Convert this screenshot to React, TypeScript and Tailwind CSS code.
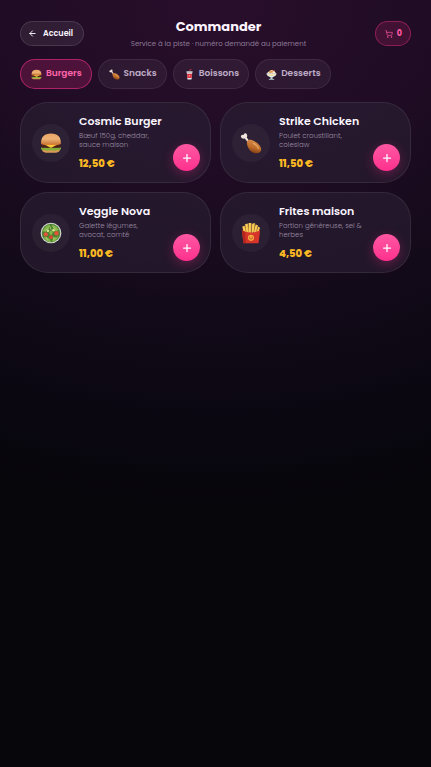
import { useState } from "react";
import type { ReactNode } from "react";
import { ArrowLeft, Plus, ShoppingCart } from "lucide-react";
import clsx from "clsx";

interface IconProps {
  className?: string;
}

function BurgerIcon({ className }: IconProps) {
  return (
    <svg viewBox="0 0 24 24" className={className} aria-hidden="true">
      <defs>
        <linearGradient id="bun" x1="0" y1="0" x2="0" y2="1">
          <stop offset="0" stopColor="#e9a566" />
          <stop offset=".5" stopColor="#eeb275" />
          <stop offset="1" stopColor="#c97838" />
        </linearGradient>
      </defs>
      <path d="M2 17.500h20c.3 3.300-1.700 5-4.500 5h-11c-2.800 0-4.800-1.700-4.500-5z" fill="#d99a55" />
      <path d="M1.200 16.800h21.600c.5 2-.8 3-2.300 2.900-1.500-.1-2.500.8-4 .8s-3-.7-4.500-.7-3 .7-4.500.7-2.500-.9-4-.8c-1.500.1-2.800-.9-2.300-2.900z" fill="#84ad3a" />
      <path d="M1.500 14.300h21c.6 1.500-.3 2.900-2 2.900h-17c-1.700 0-2.600-1.400-2-2.900z" fill="#4e2318" />
      <path d="M2 13.200h20l-4.500 1.200-4.600 2.600c-.6.400-1.200.4-1.800 0l-4.600-2.600z" fill="#fcc73b" />
      <path d="M1.200 12.400h21.600l-.4 1.300H1.600z" fill="#c4452a" />
      <path d="M1.200 12.700C.8 5.500 4.500 1.500 12 1.500s11.200 4 10.800 11.200c-3 1-18.600 1-21.600 0z" fill="url(#bun)" />
    </svg>
  );
}

function DrumstickIcon({ className }: IconProps) {
  return (
    <svg viewBox="0 0 24 24" className={className} aria-hidden="true">
      <defs>
        <linearGradient id="meat" x1=".7" y1="0" x2=".4" y2="1">
          <stop offset="0" stopColor="#d98f4c" />
          <stop offset=".6" stopColor="#bd6b29" />
          <stop offset="1" stopColor="#7d3b12" />
        </linearGradient>
      </defs>
      <path d="M10 9.500 7.400 6C8.300 4.700 8 1.700 6.200 1.300 4.800 1 4 2 4.200 3.200 2.500 2.500.7 3.600 1 5.200c.4 1.700 2.700 2.400 4.200 1.900l3.300 4z" fill="#eee4dc" />
      <path d="M8 9.600c1.500-1.700 5-1.200 8.300.7 4.700 2.700 7.500 6.200 6.700 9.600-.8 3.100-4 3.800-7.500 2.900-4.600-1.200-7-5.600-7.700-9.200-.3-1.500-.4-3.100.2-4z" fill="url(#meat)" />
      <path d="M15 12.500c2.600 1.500 4.200 3.200 5 5.200" stroke="#f4bd79" strokeWidth="1.800" strokeLinecap="round" fill="none" opacity=".6" />
    </svg>
  );
}

function DrinkIcon({ className }: IconProps) {
  return (
    <svg viewBox="0 0 24 24" className={className} aria-hidden="true">
      <path d="M12 6 13.500 1l3-.6" stroke="#e84b4b" strokeWidth="1.500" fill="none" />
      <path d="M6 7h12l-1.600 16H7.600z" fill="#e8e4ea" />
      <path d="M6.500 10.500h11l-.9 9H7.400z" fill="#d9323f" />
      <rect x="5" y="4.800" width="14" height="3" rx="1" fill="#c5d2dc" />
      <circle cx="12" cy="15" r="1.800" fill="#f48c93" />
    </svg>
  );
}

function SundaeIcon({ className }: IconProps) {
  return (
    <svg viewBox="0 0 24 24" className={className} aria-hidden="true">
      <path d="M7 15.500h10l-3 3.800v1.500l4 1.700v1H6v-1l4-1.700v-1.500z" fill="#b5cdd2" />
      <path d="M3 10c0-3.300 2.500-5 4.800-4.800C9 1.500 14.500.7 16.500 4.500c2.900 0 4.700 2.500 4.500 5.500z" fill="#fff0d6" />
      <path d="M6.500 7.600C8 3 12 1.600 15.500 4.500c1.500 2.500-1.200 4-3.200 3.300-1.800 1.700-4.500 1.500-5.800-.2z" fill="#d99a55" />
      <path d="M1 9.500h22c0 4-3.500 8-8.500 8h-5C4.500 17.500 1 13.500 1 9.500z" fill="#e6ece6" />
      <path d="M4 11h16c-1 3-3.500 4.500-6.500 4.500h-3C7.500 15.500 5 14 4 11z" fill="#f2dfae" />
      <circle cx="17.500" cy="3" r="1.600" fill="#d4363a" />
    </svg>
  );
}

function SaladIcon({ className }: IconProps) {
  return (
    <svg viewBox="0 0 24 24" className={className} aria-hidden="true">
      <circle cx="12" cy="12" r="11.300" fill="#d5dad4" />
      <circle cx="12" cy="12" r="10.100" fill="#4d8230" />
      <path d="M3 10c1.500-4 4.500-6.700 8-7l-1 4-3 1-1 3zM13 3l5 2 2.500 4-4 1-2-3zM4 16l4 1 3 2 1 3C8 21.500 5 19.500 4 16zM14 16l4 1 2-2c-.5 3.500-3 6-6 7zM10 11l2-2 2 2-1 3h-2z" fill="#86b64c" />
      <path d="m6 9 3-2M14 5l3 3M8 19l-1-2M16 18l-2 2M11 5l1 3" stroke="#b9d979" strokeWidth=".8" strokeLinecap="round" />
      <circle cx="6.300" cy="13.500" r="2.300" fill="#e0553a" />
      <circle cx="18" cy="12.300" r="2.400" fill="#e0553a" />
      <circle cx="12" cy="16.500" r="2.100" fill="#d94a35" />
      <circle cx="8.600" cy="9.500" r="1.400" fill="#dcea92" />
      <circle cx="14.700" cy="9" r="1.400" fill="#dcea92" />
    </svg>
  );
}

function FriesIcon({ className }: IconProps) {
  return (
    <svg viewBox="0 0 24 24" className={className} aria-hidden="true">
      <path d="m2.500 5 2.600-1L7 12H4zM5.500 2.500l3-.8L9.500 12H7zM9.300 1l3.100.2L12 12H9.500zM13.300 1.800l3-.6L15 12h-2.500zM17 2.600l2.500 1L17.500 12H15zM20 5l1.800 1.200L19.500 13l-2-1z" fill="#f6cd58" />
      <path d="M5.200 4 7 12M8.600 2.500l.8 9M12.500 2 12 12M16.200 2 15 12M19.400 4l-2 8" stroke="#d88d28" strokeWidth=".6" />
      <path d="M2 8.500c3 3.800 17 3.800 20 0L20.400 22c-.2.900-.6 1.300-1.500 1.300H5.100c-.9 0-1.300-.4-1.500-1.300z" fill="#d8352a" />
      <path d="M2 8.500c.8 1 2 1.700 3.500 2.200l1 12.600H5.100c-.9 0-1.300-.4-1.500-1.300z" fill="#b3251d" />
      <circle cx="12" cy="17.300" r="3.300" fill="#f6ae3f" />
      <path d="M10.300 16.500h.5M13.200 16.500h.5M10.500 18.200q1.500 1.200 3 0" stroke="#b6321e" strokeWidth=".8" strokeLinecap="round" fill="none" />
    </svg>
  );
}

interface Category {
  id: string;
  label: string;
  icon: ReactNode;
}

const CATEGORIES: Category[] = [
  { id: "burgers", label: "Burgers", icon: <BurgerIcon className="size-[11px]" /> },
  { id: "snacks", label: "Snacks", icon: <DrumstickIcon className="size-[11px]" /> },
  { id: "boissons", label: "Boissons", icon: <DrinkIcon className="size-[11px]" /> },
  { id: "desserts", label: "Desserts", icon: <SundaeIcon className="size-[11px]" /> },
];

interface Product {
  name: string;
  description: string;
  price: string;
  icon: ReactNode;
}

const PRODUCTS: Product[] = [
  {
    name: "Cosmic Burger",
    description: "Bœuf 150g, cheddar, sauce maison",
    price: "12,50 €",
    icon: <BurgerIcon className="size-[22px]" />,
  },
  {
    name: "Strike Chicken",
    description: "Poulet croustillant, coleslaw",
    price: "11,50 €",
    icon: <DrumstickIcon className="size-[22px]" />,
  },
  {
    name: "Veggie Nova",
    description: "Galette légumes, avocat, comté",
    price: "11,00 €",
    icon: <SaladIcon className="size-[22px]" />,
  },
  {
    name: "Frites maison",
    description: "Portion généreuse, sel & herbes",
    price: "4,50 €",
    icon: <FriesIcon className="size-[22px]" />,
  },
];

function ProductCard({ product, onAdd }: { product: Product; onAdd: () => void }) {
  return (
    <article className="flex items-center gap-[9px] rounded-[28px] border border-white/8 bg-[#2a1f33]/65 py-[11px] pr-[10px] pl-[11px]">
      <div className="flex size-[38px] shrink-0 items-center justify-center rounded-full bg-white/4">
        {product.icon}
      </div>
      <div className="min-w-0 flex-1">
        <h2 className="text-[11px] leading-[14px] font-semibold whitespace-nowrap text-[#faf5ff]">
          {product.name}
        </h2>
        <p className="mt-[3px] text-[7px] leading-[9px] font-light text-[#9b8ca4]">
          {product.description}
        </p>
        <p className="mt-2 text-[10px] leading-[14px] font-extrabold text-[#fbb924]">
          {product.price}
        </p>
      </div>
      <button
        type="button"
        aria-label={`Ajouter ${product.name}`}
        onClick={onAdd}
        className="flex size-[27px] shrink-0 items-center justify-center self-end rounded-full bg-linear-to-b from-[#ff56a2] to-[#ff2f8e] text-white shadow-[0_3px_12px_rgba(255,45,140,0.3)]"
      >
        <Plus className="size-3" strokeWidth={2.5} />
      </button>
    </article>
  );
}

export default function App() {
  const [active, setActive] = useState("burgers");
  const [count, setCount] = useState(0);

  return (
    <main className="min-h-screen bg-[#07060b] bg-[radial-gradient(ellipse_150%_66%_at_50%_0%,#290e2b_0%,#1f0c24_35%,#130a19_60%,#0a0711_85%,#07060b_100%)] px-5 pt-5 pb-5 font-['Poppins','Inter',sans-serif]">
      {/* Header */}
      <header className="flex items-start justify-between">
        <button
          type="button"
          className="mt-px flex h-[25px] w-16 items-center gap-[6px] rounded-full border border-white/12 bg-white/7 pl-[7px] text-[8px] font-semibold text-[#faf5ff]"
        >
          <ArrowLeft className="size-[9px]" strokeWidth={2.5} />
          Accueil
        </button>
        <div className="text-center">
          <h1 className="text-[13px] leading-[14px] font-bold text-[#fdf4ff]">Commander</h1>
          <p className="mt-1 text-[7px] leading-[12px] text-[#8d7a96]">
            Service à la piste · numéro demandé au paiement
          </p>
        </div>
        <div className="flex w-[58px] justify-end">
          <button
            type="button"
            aria-label="Panier"
            className="mt-px flex h-[25px] items-center gap-1 rounded-full border border-[#ff2f8e]/40 bg-[#ff2f8e]/15 pr-2 pl-[9px] text-[8px] font-bold text-[#ff5ba5]"
          >
            <ShoppingCart className="size-2" />
            {count}
          </button>
        </div>
      </header>

      {/* Categories */}
      <nav className="mt-[9px] flex gap-[6px]">
        {CATEGORIES.map((category) => (
          <button
            key={category.id}
            type="button"
            aria-pressed={active === category.id}
            onClick={() => setActive(category.id)}
            className={clsx(
              "flex h-[30px] items-center gap-1 rounded-full border pr-[9px] pl-[10px] text-[9px] font-semibold",
              active === category.id
                ? "border-[#ff2f8e]/55 bg-[#ff2f8e]/20 text-[#ff66ad]"
                : "border-white/8 bg-white/5 text-[#bfadc8]",
            )}
          >
            {category.icon}
            {category.label}
          </button>
        ))}
      </nav>

      {/* Products */}
      <section className="mt-[13px] grid grid-cols-2 gap-[9px]">
        {PRODUCTS.map((product) => (
          <ProductCard
            key={product.name}
            product={product}
            onAdd={() => setCount((value) => value + 1)}
          />
        ))}
      </section>
    </main>
  );
}
